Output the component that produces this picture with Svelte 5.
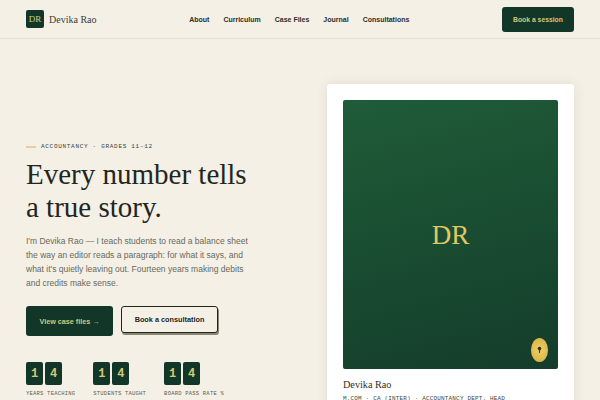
<script>
  const links = ["About", "Curriculum", "Case Files", "Journal", "Consultations"]
  const stats = [
    { digits: ["1", "4"], label: "Years teaching" },
    { digits: ["1", "4"], label: "Students taught" },
    { digits: ["1", "4"], label: "Board pass rate %" }
  ]
</script>

<div class="page">
  <header class="nav">
    <a class="brand" href="#top">
      <span class="monogram">DR</span>
      <span class="brand-name">Devika Rao</span>
    </a>
    <nav class="links">
      {#each links as link}
        <a href="#top">{link}</a>
      {/each}
    </nav>
    <button type="button" class="btn btn-small">Book a session</button>
  </header>

  <main class="hero">
    <section class="intro">
      <p class="eyebrow"><span class="dash"></span>Accountancy · Grades 11–12</p>
      <h1>Every number tells<br />a true story.</h1>
      <p class="lede">
        I'm Devika Rao — I teach students to read a balance sheet the way an
        editor reads a paragraph: for what it says, and what it's quietly
        leaving out. Fourteen years making debits and credits make sense.
      </p>
      <div class="actions">
        <button type="button" class="btn btn-primary">View case files →</button>
        <button type="button" class="btn btn-ghost">Book a consultation</button>
      </div>
      <div class="stats">
        {#each stats as stat}
          <div class="stat">
            <div class="tiles">
              {#each stat.digits as digit}
                <span class="tile">{digit}</span>
              {/each}
            </div>
            <span class="stat-label">{stat.label}</span>
          </div>
        {/each}
      </div>
    </section>

    <aside class="card">
      <div class="portrait">
        <span class="portrait-initials">DR</span>
        <span class="seal">
          <svg viewBox="0 0 10 14" width="5" height="8" aria-hidden="true">
            <circle cx="5" cy="4" r="3.6" fill="#3a3214" />
            <path d="M3.6 6h2.8L5.8 13H4.2z" fill="#3a3214" />
          </svg>
        </span>
      </div>
      <p class="card-name">Devika Rao</p>
      <p class="card-role">M.Com · CA (Inter) · Accountancy Dept. Head</p>
    </aside>
  </main>
</div>

<style>
  :global(body) {
    background: #f5f0e6;
  }

  .page {
    height: 400px;
    overflow: hidden;
    background: #f5f0e6;
    color: #1f2420;
    font-family: "Liberation Sans", Arial, sans-serif;
  }

  .nav {
    display: flex;
    align-items: center;
    justify-content: space-between;
    height: 38px;
    padding: 0 26px;
    border-bottom: 1px solid #e6e1d5;
  }

  .brand {
    display: flex;
    align-items: center;
    gap: 5px;
    text-decoration: none;
    color: #3a3d38;
  }

  .monogram {
    display: flex;
    align-items: center;
    justify-content: center;
    width: 18px;
    height: 18px;
    border-radius: 2px;
    background: #123628;
    color: #cfcf86;
    font-family: "Liberation Serif", serif;
    font-size: 9px;
  }

  .brand-name {
    font-family: "Liberation Serif", serif;
    font-size: 10px;
  }

  .links {
    display: flex;
    gap: 14px;
  }

  .links a {
    font-size: 7px;
    font-weight: 700;
    color: #2b2e2a;
    text-decoration: none;
  }

  .btn {
    font-family: "Liberation Sans", Arial, sans-serif;
    font-weight: 700;
    border-radius: 3px;
    cursor: pointer;
  }

  .btn-small {
    width: 72px;
    height: 25px;
    margin-top: 1px;
    border: 0;
    font-size: 6.8px;
    background: #123628;
    color: #d4c878;
  }

  .hero {
    display: grid;
    grid-template-columns: 1fr 247px;
    gap: 40px;
    padding: 45px 26px 0;
    align-items: start;
  }

  .intro {
    padding-top: 57px;
  }

  .eyebrow {
    display: flex;
    align-items: center;
    gap: 5px;
    margin: 0;
    height: 11px;
    font-family: "Liberation Mono", monospace;
    font-size: 6px;
    letter-spacing: 0.7px;
    text-transform: uppercase;
    color: #33453a;
  }

  .dash {
    width: 10px;
    height: 2px;
    background: #e6cf9c;
  }

  h1 {
    margin: 6px 0 0;
    font-family: "Liberation Serif", serif;
    font-weight: 400;
    font-size: 29px;
    line-height: 33px;
    color: #22261f;
  }

  .lede {
    margin: 10px 0 0;
    max-width: 228px;
    font-size: 8.5px;
    line-height: 14px;
    color: #666a60;
  }

  .actions {
    display: flex;
    align-items: flex-start;
    gap: 8px;
    margin-top: 16px;
  }

  .btn-primary {
    width: 87px;
    height: 30px;
    border: 0;
    font-size: 7.2px;
    background: #123628;
    color: #d4c878;
  }

  .btn-ghost {
    width: 97px;
    height: 27px;
    border: 1px solid #22261f;
    font-size: 7.3px;
    background: #f5f0e6;
    color: #22261f;
    box-shadow: 1px 2px 0 #8a8676;
  }

  .stats {
    display: flex;
    gap: 18px;
    margin-top: 26px;
  }

  .stat {
    display: flex;
    flex-direction: column;
    gap: 5px;
  }

  .tiles {
    display: flex;
    gap: 2px;
  }

  .tile {
    display: flex;
    align-items: center;
    justify-content: center;
    width: 17px;
    height: 23px;
    border-radius: 2px;
    background: #123628;
    color: #d4c878;
    font-family: "Liberation Mono", monospace;
    font-weight: 700;
    font-size: 12px;
  }

  .stat-label {
    font-family: "Liberation Mono", monospace;
    font-size: 5.5px;
    letter-spacing: 0.22px;
    text-transform: uppercase;
    color: #5a5e54;
    white-space: nowrap;
  }

  .card {
    padding: 16px;
    background: #fff;
    border-radius: 3px;
    box-shadow: 0 0 12px rgba(60, 50, 30, 0.1);
  }

  .portrait {
    position: relative;
    display: flex;
    align-items: center;
    justify-content: center;
    height: 269px;
    border-radius: 2px;
    background: linear-gradient(165deg, #1f5c38 0%, #143d2b 100%);
  }

  .portrait-initials {
    padding-top: 2px;
    font-family: "Liberation Serif", serif;
    font-size: 27px;
    color: #e0c766;
  }

  .seal {
    position: absolute;
    right: 10px;
    bottom: 7px;
    display: flex;
    align-items: center;
    justify-content: center;
    width: 17px;
    height: 24px;
    border-radius: 50%;
    background: radial-gradient(circle, #edcf62 0%, #d6b046 100%);
  }

  .card-name {
    margin: 10px 0 0;
    font-family: "Liberation Serif", serif;
    font-size: 10.2px;
    color: #2b2e2a;
  }

  .card-role {
    margin: 5px 0 0;
    font-family: "Liberation Mono", monospace;
    font-size: 6px;
    letter-spacing: 0.17px;
    text-transform: uppercase;
    color: #3e4a40;
    white-space: nowrap;
  }
</style>
